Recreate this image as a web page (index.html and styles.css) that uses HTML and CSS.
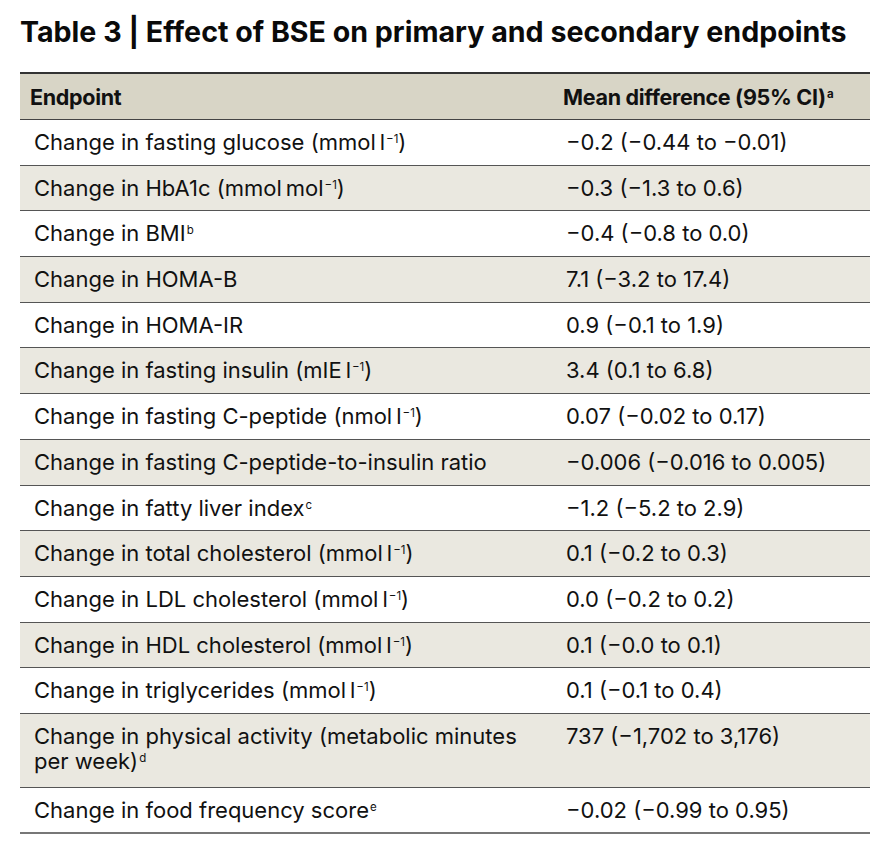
FILE: index.html
```html
<!DOCTYPE html>
<html lang="en">
<head>
<meta charset="utf-8">
<title>Table 3</title>
<link rel="stylesheet" href="styles.css">
</head>
<body>
<div class="page">
  <h1 class="title">Table 3 | Effect of BSE on primary and secondary endpoints</h1>
  <table class="data">
    <thead>
      <tr><th class="c1">Endpoint</th><th class="c2">Mean difference (95% CI)<sup>a</sup></th></tr>
    </thead>
    <tbody>
      <tr><td>Change in fasting glucose (mmol&#8201;l<sup>−1</sup>)</td><td>−0.2 (−0.44 to −0.01)</td></tr>
      <tr><td>Change in HbA1c (mmol&#8201;mol<sup>−1</sup>)</td><td>−0.3 (−1.3 to 0.6)</td></tr>
      <tr><td>Change in BMI<sup>b</sup></td><td>−0.4 (−0.8 to 0.0)</td></tr>
      <tr><td>Change in HOMA-B</td><td>7.1 (−3.2 to 17.4)</td></tr>
      <tr><td>Change in HOMA-IR</td><td>0.9 (−0.1 to 1.9)</td></tr>
      <tr><td>Change in fasting insulin (mIE&#8201;l<sup>−1</sup>)</td><td>3.4 (0.1 to 6.8)</td></tr>
      <tr><td>Change in fasting C-peptide (nmol&#8201;l<sup>−1</sup>)</td><td>0.07 (−0.02 to 0.17)</td></tr>
      <tr><td>Change in fasting C-peptide-to-insulin ratio</td><td>−0.006 (−0.016 to 0.005)</td></tr>
      <tr><td>Change in fatty liver index<sup>c</sup></td><td>−1.2 (−5.2 to 2.9)</td></tr>
      <tr><td>Change in total cholesterol (mmol&#8201;l<sup>−1</sup>)</td><td>0.1 (−0.2 to 0.3)</td></tr>
      <tr><td>Change in LDL cholesterol (mmol&#8201;l<sup>−1</sup>)</td><td>0.0 (−0.2 to 0.2)</td></tr>
      <tr><td>Change in HDL cholesterol (mmol&#8201;l<sup>−1</sup>)</td><td>0.1 (−0.0 to 0.1)</td></tr>
      <tr><td>Change in triglycerides (mmol&#8201;l<sup>−1</sup>)</td><td>0.1 (−0.1 to 0.4)</td></tr>
      <tr class="tall"><td><span class="ln">Change in physical activity (metabolic minutes</span> <span class="ln">per week)<sup>d</sup></span></td><td>737 (−1,702 to 3,176)</td></tr>
      <tr><td>Change in food frequency score<sup>e</sup></td><td>−0.02 (−0.99 to 0.95)</td></tr>
    </tbody>
  </table>
</div>
</body>
</html>
```

FILE: styles.css
```css
html, body {
  margin: 0;
  padding: 0;
  background: #ffffff;
}

body {
  font-family: "Inter", "Liberation Sans", sans-serif;
  color: #111111;
}

.page {
  padding: 14px 20px 0 20px;
}

.title {
  margin: 0 0 22px 0;
  font-size: 28.6px;
  line-height: 36px;
  font-weight: 700;
  letter-spacing: 0;
  color: #0a0a0a;
}

.data {
  width: 850px;
  border-collapse: collapse;
  font-size: 22px;
}

.data th {
  background: #d8d5c6;
  text-align: left;
  font-weight: 700;
  font-size: 21.5px;
  height: 45px;
  padding: 0;
  border-top: 2px solid #333333;
  border-bottom: 1px solid #444444;
  vertical-align: middle;
  letter-spacing: -0.3px;
}

.data th.c1 {
  padding-left: 10px;
  width: 533px;
}

.data th.c2 {
  padding-left: 0;
}

.data td {
  height: 45.7px;
  box-sizing: border-box;
  padding: 10px 0 0 0;
  vertical-align: top;
  line-height: 25px;
  border-bottom: 1px solid #555555;
}

.data td:first-child {
  padding-left: 14px;
  padding-right: 20px;
}

.data td:last-child {
  padding-left: 3px;
}

.data tbody tr:nth-child(even) td {
  background: #eae8e0;
}

.data tbody tr:last-child td {
  border-bottom: 2px solid #777777;
}

.data tr.tall td {
  height: 74px;
}

.data .ln {
  display: block;
}

.data sup {
  font-size: 11.5px;
  line-height: 0;
  vertical-align: 7px;
  margin-left: 1px;
}
```
